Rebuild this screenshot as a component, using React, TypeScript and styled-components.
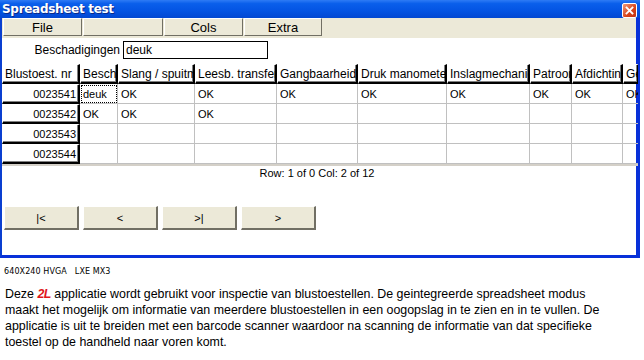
import React from "react";
import styled, { createGlobalStyle } from "styled-components";

const Global = createGlobalStyle`
  html, body { margin: 0; padding: 0; background: #fff; }
  body { font-family: "Liberation Sans", Arial, sans-serif; width: 644px; height: 360px; overflow: hidden; }
`;

const Page = styled.div`
  display: flex;
  flex-direction: column;
  width: 644px;
`;

const Window = styled.div`
  width: 640px;
  height: 258px;
  box-sizing: border-box;
  border-left: 2px solid #0A3FD0;
  border-right: 4px solid #0831D9;
  border-bottom: 3px solid #0831D9;
  display: flex;
  flex-direction: column;
  background: #fff;
`;

const TitleBar = styled.div`
  height: 18px;
  margin-left: -2px;
  margin-right: -4px;
  background: linear-gradient(#2E7BF5 0%, #0A5FEB 20%, #0454E3 60%, #0248D2 100%);
  display: flex;
  align-items: center;
  justify-content: space-between;
  padding: 0 3px 0 2px;
`;

const Title = styled.span`
  color: #fff;
  font-family: "DejaVu Sans", Tahoma, sans-serif;
  font-weight: bold;
  font-size: 12px;
  letter-spacing: -0.3px;
  text-shadow: 1px 1px 0 #0A2A8A;
`;

const CloseBtn = styled.div`
  width: 13px;
  height: 13px;
  margin-top: 3px;
  border: 1px solid #fff;
  border-radius: 2px;
  background: linear-gradient(135deg, #F09A7A, #D6431A 60%, #C23410);
  display: flex;
  align-items: center;
  justify-content: center;
`;

const MenuBar = styled.div`
  height: 20px;
  background: #ECE9D8;
  display: flex;
  gap: 1px;
  padding: 0 0 0 1px;
`;

const MenuButton = styled.div<{ $w: number }>`
  width: ${(p) => p.$w}px;
  height: 18px;
  box-sizing: border-box;
  border-top: 1px solid #fff;
  border-left: 1px solid #fff;
  border-right: 1px solid #716F64;
  border-bottom: 1px solid #716F64;
  font-size: 13px;
  display: flex;
  align-items: center;
  justify-content: center;
  color: #000;
`;

const FieldRow = styled.div`
  display: flex;
  align-items: center;
  height: 22px;
  margin-top: 1px;
`;

const Label = styled.span`
  width: 118px;
  text-align: right;
  font-size: 12px;
  padding-right: 3px;
`;

const Input = styled.div`
  width: 145px;
  height: 18px;
  box-sizing: border-box;
  border: 1px solid #000;
  font-size: 12px;
  padding-left: 2px;
  display: flex;
  align-items: center;
`;

const Grid = styled.div`
  margin-top: 3px;
  display: flex;
  flex-direction: column;
  overflow: hidden;
  border-bottom: 2px solid #D4D0C8;
  width: 636px;
`;

const GridRow = styled.div<{ $h: number }>`
  display: flex;
  height: ${(p) => p.$h}px;
`;

const HeadCell = styled.div<{ $w: number; $right?: boolean }>`
  flex: 0 0 ${(p) => p.$w}px;
  box-sizing: border-box;
  background: #fff;
  border-top: 1px solid #fff;
  border-left: 1px solid #fff;
  border-right: 2px solid #000;
  border-bottom: 2px solid #000;
  font-size: ${(p) => (p.$right ? 11 : 12)}px;
  padding: 0 2px 0 2px;
  display: flex;
  align-items: center;
  justify-content: ${(p) => (p.$right ? "flex-end" : "flex-start")};
  white-space: nowrap;
  overflow: hidden;
  box-shadow: inset -1px -1px 0 #808080;
`;

const Cell = styled.div<{ $w: number; $sel?: boolean }>`
  flex: 0 0 ${(p) => p.$w}px;
  box-sizing: border-box;
  border-right: 1px solid #C0C0C0;
  border-bottom: 1px solid #C0C0C0;
  font-size: 11px;
  padding: 0 3px;
  display: flex;
  align-items: center;
  white-space: nowrap;
  overflow: hidden;
  outline: ${(p) => (p.$sel ? "1px dotted #000" : "none")};
  outline-offset: -2px;
`;

const Status = styled.div`
  margin-top: 1px;
  text-align: center;
  font-size: 11px;
  padding-right: 4px;
`;

const NavRow = styled.div`
  margin-top: 27px;
  display: flex;
  gap: 4px;
  padding-left: 2px;
`;

const NavButton = styled.div`
  width: 75px;
  height: 24px;
  box-sizing: border-box;
  background: #ECE9D8;
  border-top: 1px solid #fff;
  border-left: 1px solid #fff;
  border-right: 2px solid #716F64;
  border-bottom: 2px solid #716F64;
  font-size: 11px;
  display: flex;
  align-items: center;
  justify-content: center;
`;

const Small = styled.div`
  margin-top: 9px;
  padding-left: 4px;
  font-family: "DejaVu Sans", sans-serif;
  font-size: 8px;
  letter-spacing: 0.1px;
  white-space: pre;
`;

const Para = styled.p`
  margin: 10px 0 0 5px;
  font-size: 12.4px;
  line-height: 16px;
  color: #000;
  white-space: nowrap;
`;

const Logo = styled.span`
  color: #E0161B;
  font-weight: bold;
  font-style: italic;
  letter-spacing: -0.5px;
`;

const cols = [78, 38, 77, 82, 81, 89, 83, 42, 51, 16];
const heads = [
  "Blustoest. nr",
  "Besch",
  "Slang / spuitmond",
  "Leesb. transfer",
  "Gangbaarheid",
  "Druk manometer",
  "Inslagmechaniek",
  "Patroon",
  "Afdichting",
  "Geen",
];
const rows: { id: string; vals: string[] }[] = [
  { id: "0023541", vals: ["deuk", "OK", "OK", "OK", "OK", "OK", "OK", "OK", "OK"] },
  { id: "0023542", vals: ["OK", "OK", "OK", "", "", "", "", "", ""] },
  { id: "0023543", vals: ["", "", "", "", "", "", "", "", ""] },
  { id: "0023544", vals: ["", "", "", "", "", "", "", "", ""] },
];

export default function App() {
  return (
    <Page>
      <Global />
      <Window>
        <TitleBar>
          <Title>Spreadsheet test</Title>
          <CloseBtn>
            <svg width="9" height="9" viewBox="0 0 9 9">
              <path d="M1.5 1.5 L7.5 7.5 M7.5 1.5 L1.5 7.5" stroke="#fff" strokeWidth="1.8" strokeLinecap="square" />
            </svg>
          </CloseBtn>
        </TitleBar>
        <MenuBar>
          <MenuButton $w={79}>File</MenuButton>
          <MenuButton $w={80}></MenuButton>
          <MenuButton $w={79}>Cols</MenuButton>
          <MenuButton $w={78}>Extra</MenuButton>
        </MenuBar>
        <FieldRow>
          <Label>Beschadigingen</Label>
          <Input>deuk</Input>
        </FieldRow>
        <Grid>
          <GridRow $h={20}>
            {heads.map((h, i) => (
              <HeadCell key={h} $w={cols[i]}>
                {h}
              </HeadCell>
            ))}
          </GridRow>
          {rows.map((r) => (
            <GridRow key={r.id} $h={20}>
              <HeadCell $w={cols[0]} $right>
                {r.id}
              </HeadCell>
              {r.vals.map((v, i) => (
                <Cell key={i} $w={cols[i + 1]} $sel={r.id === "0023541" && i === 0}>
                  {v}
                </Cell>
              ))}
            </GridRow>
          ))}
        </Grid>
        <Status>Row: 1 of 0 Col: 2 of 12</Status>
        <NavRow>
          <NavButton>|&lt;</NavButton>
          <NavButton>&lt;</NavButton>
          <NavButton>&gt;|</NavButton>
          <NavButton>&gt;</NavButton>
        </NavRow>
      </Window>
      <Small>640X240 HVGA   LXE MX3</Small>
      <Para>
        Deze <Logo>2L</Logo> applicatie wordt gebruikt voor inspectie van blustoestellen. De geintegreerde spreadsheet modus
        <br />
        maakt het mogelijk om informatie van meerdere blustoestellen in een oogopslag in te zien en in te vullen. De
        <br />
        applicatie is uit te breiden met een barcode scanner waardoor na scanning de informatie van dat specifieke
        <br />
        toestel op de handheld naar voren komt.
      </Para>
    </Page>
  );
}
